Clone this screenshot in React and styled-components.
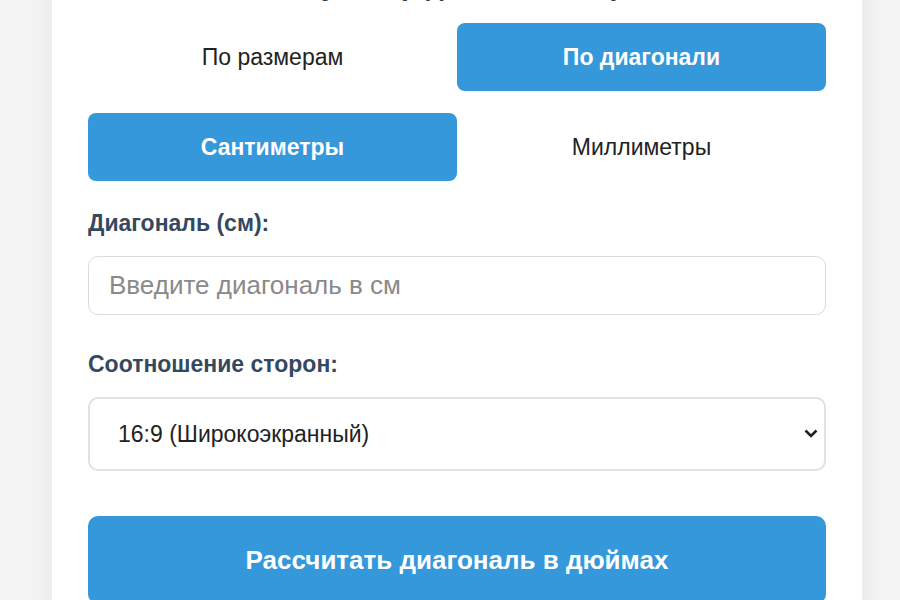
import React, { useState } from "react";
import styled, { createGlobalStyle } from "styled-components";

const Global = createGlobalStyle`
  html, body { margin: 0; padding: 0; background: #f4f4f4; }
  body { font-family: "Liberation Sans", Arial, sans-serif; overflow: hidden; }
  * { box-sizing: border-box; }
`;

const Page = styled.div`
  display: flex;
  padding-left: 52px;
  margin-top: -30px;
`;

const Card = styled.div`
  width: 810px;
  background: #ffffff;
  box-shadow: 0 0 24px rgba(0, 0, 0, 0.07);
  padding: 0 36px 40px;
`;

const Title = styled.h1`
  margin: 0 0 21px;
  font-size: 28px;
  line-height: 32px;
  font-weight: 700;
  color: #2c3e50;
  text-align: center;
`;

const Toggle = styled.div`
  display: grid;
  grid-template-columns: 1fr 1fr;
  margin-bottom: 22px;
`;

const ToggleBtn = styled.button`
  height: 68px;
  border: none;
  border-radius: 8px;
  font-family: inherit;
  font-size: 23px;
  font-weight: ${(p) => (p.$active ? 700 : 400)};
  color: ${(p) => (p.$active ? "#ffffff" : "#222222")};
  background: ${(p) => (p.$active ? "#3498db" : "transparent")};
  cursor: pointer;
`;

const Group = styled.div`
  display: flex;
  flex-direction: column;
  margin-top: ${(p) => p.$top || 0}px;
`;

const Label = styled.label`
  font-size: 23px;
  line-height: 26px;
  font-weight: 700;
  color: #34495e;
  margin-bottom: 20px;
`;

const Input = styled.input`
  height: 59px;
  width: 100%;
  border: 1px solid #dcdcdc;
  border-radius: 10px;
  padding: 0 20px;
  font-family: inherit;
  font-size: 26px;
  color: #222;
  outline: none;
  &::placeholder { color: #8a8a8a; }
`;

const SelectWrap = styled.div`
  position: relative;
`;

const Select = styled.select`
  appearance: none;
  width: 100%;
  height: 74px;
  border: 2px solid #e1e1e1;
  border-radius: 10px;
  padding: 0 28px;
  font-family: inherit;
  font-size: 23px;
  color: #222;
  background: #fff;
  outline: none;
`;

const Chevron = styled.svg`
  position: absolute;
  right: 8px;
  top: 32px;
  pointer-events: none;
`;

const Submit = styled.button`
  margin-top: 45px;
  height: 88px;
  width: 100%;
  border: none;
  border-radius: 10px;
  background: #3498db;
  color: #fff;
  font-family: inherit;
  font-size: 26px;
  font-weight: 700;
`;

export default function App() {
  const [mode, setMode] = useState("diag");
  const [unit, setUnit] = useState("cm");
  return (
    <>
      <Global />
      <Page>
        <Card>
          <Title>Калькулятор диагонали экрана</Title>
          <Toggle>
            <ToggleBtn $active={mode === "size"} onClick={() => setMode("size")}>По размерам</ToggleBtn>
            <ToggleBtn $active={mode === "diag"} onClick={() => setMode("diag")}>По диагонали</ToggleBtn>
          </Toggle>
          <Toggle>
            <ToggleBtn $active={unit === "cm"} onClick={() => setUnit("cm")}>Сантиметры</ToggleBtn>
            <ToggleBtn $active={unit === "mm"} onClick={() => setUnit("mm")}>Миллиметры</ToggleBtn>
          </Toggle>
          <Group $top={29}>
            <Label>Диагональ (см):</Label>
            <Input placeholder="Введите диагональ в см" />
          </Group>
          <Group $top={36}>
            <Label>Соотношение сторон:</Label>
            <SelectWrap>
              <Select defaultValue="16:9">
                <option value="16:9">16:9 (Широкоэкранный)</option>
                <option value="4:3">4:3 (Стандартный)</option>
                <option value="21:9">21:9 (Ультраширокий)</option>
              </Select>
              <Chevron width="14" height="9" viewBox="0 0 14 9">
                <path d="M1.5 1.5 L7 7 L12.5 1.5" fill="none" stroke="#222" strokeWidth="2.6" />
              </Chevron>
            </SelectWrap>
          </Group>
          <Submit>Рассчитать диагональ в дюймах</Submit>
        </Card>
      </Page>
    </>
  );
}
